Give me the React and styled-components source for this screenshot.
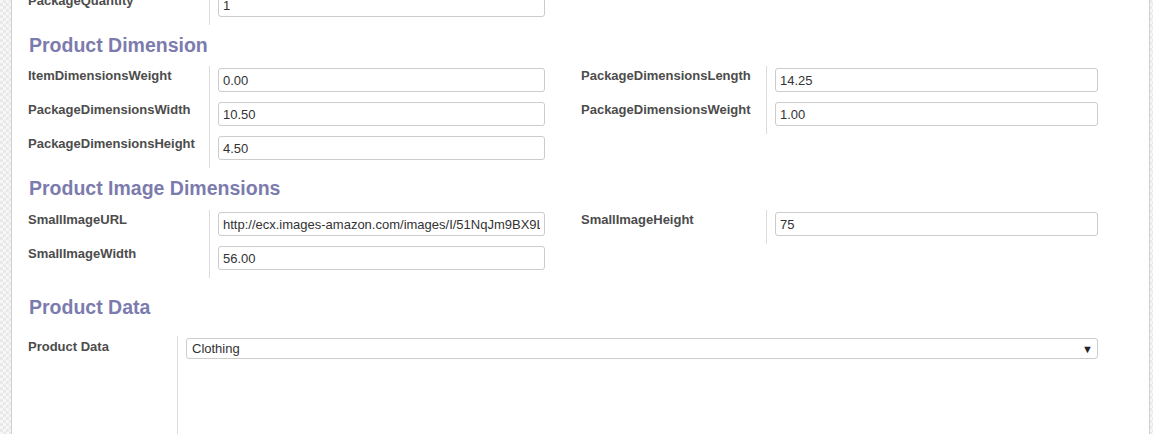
import React from "react";
import { createGlobalStyle, styled } from "styled-components";

const GlobalStyle = createGlobalStyle`
  html, body {
    margin: 0;
    padding: 0;
  }
  body {
    font-family: "Liberation Sans", Arial, sans-serif;
    font-size: 13px;
    color: #4c4c4c;
  }
`;

const Page = styled.div`
  display: flex;
  height: 434px;
  overflow: hidden;
  padding: 0 3px 0 11px;
  background-color: #f3f3f3;
  background-image: repeating-conic-gradient(#e9e9e9 0% 25%, #f7f7f7 0% 50%);
  background-size: 6px 6px;
`;

const Sheet = styled.div`
  flex: 1;
  background: #fff;
  border-left: 1px solid #cfcfcf;
  border-right: 1px solid #cfcfcf;
  padding: 0 15px 0 16px;
`;

/* the form is scrolled a little, so the first row is cut at the top */
const Scrolled = styled.div`
  margin-top: -9px;
`;

const Heading = styled.h2`
  margin: ${(p) => p.$margin || "7px 0 6px"};
  padding-left: 1px;
  font-size: 19.5px;
  line-height: 27px;
  font-weight: bold;
  color: #7c7bad;
`;

const Columns = styled.div`
  display: grid;
  grid-template-columns: 1fr 1fr;
  align-items: start;
`;

const Group = styled.div`
  display: grid;
  grid-template-columns: ${(p) => p.$labelWidth}px 1fr;
  padding-right: 36px;
`;

const Label = styled.div`
  border-right: 1px solid #dcdcdc;
  padding: ${(p) => p.$top || 1}px 8px 0 0;
  height: ${(p) => p.$tall || 33}px;
  font-weight: bold;
  line-height: 17px;
  color: #4c4c4c;
  white-space: nowrap;
`;

const Value = styled.div`
  padding: 2px 0 8px 8px;
`;

const Input = styled.input`
  box-sizing: border-box;
  display: block;
  width: 100%;
  height: 24px;
  margin: 0;
  padding: 0 4px;
  border: 1px solid #cccccc;
  border-radius: 3px;
  background: #fff;
  font-family: "Liberation Sans", Arial, sans-serif;
  font-size: 13px;
  color: #333;
  outline: none;
`;

const Select = styled.div`
  box-sizing: border-box;
  display: flex;
  align-items: center;
  justify-content: space-between;
  height: 21px;
  padding: 0 4px 0 5px;
  border: 1px solid #cccccc;
  border-radius: 3px;
  font-size: 13px;
  color: #333;
`;

const Arrow = styled.span`
  font-size: 11px;
  color: #222;
`;

const Field = ({ label, value }) => (
  <>
    <Label>{label}</Label>
    <Value>
      <Input readOnly value={value} />
    </Value>
  </>
);

const App = () => {
  return (
    <>
      <GlobalStyle />
      <Page>
        <Sheet>
          <Scrolled>
            <Columns>
              <Group $labelWidth={182}>
                <Field label="PackageQuantity" value="1" />
              </Group>
            </Columns>

            <Heading $margin="7px 0 7px">Product Dimension</Heading>
            <Columns>
              <Group $labelWidth={182}>
                <Field label="ItemDimensionsWeight" value="0.00" />
                <Field label="PackageDimensionsWidth" value="10.50" />
                <Field label="PackageDimensionsHeight" value="4.50" />
              </Group>
              <Group $labelWidth={186}>
                <Field label="PackageDimensionsLength" value="14.25" />
                <Field label="PackageDimensionsWeight" value="1.00" />
              </Group>
            </Columns>

            <Heading $margin="7px 0 8px">Product Image Dimensions</Heading>
            <Columns>
              <Group $labelWidth={182}>
                <Field
                  label="SmallImageURL"
                  value="http://ecx.images-amazon.com/images/I/51NqJm9BX9L._SL75_.jpg"
                />
                <Field label="SmallImageWidth" value="56.00" />
              </Group>
              <Group $labelWidth={186}>
                <Field label="SmallImageHeight" value="75" />
              </Group>
            </Columns>

            <Heading $margin="16px 0 15px">Product Data</Heading>
            <Group $labelWidth={150}>
              <Label $tall={200} $top={2}>
                Product Data
              </Label>
              <Value>
                <Select>
                  Clothing
                  <Arrow>▼</Arrow>
                </Select>
              </Value>
            </Group>
          </Scrolled>
        </Sheet>
      </Page>
    </>
  );
};

export default App;
